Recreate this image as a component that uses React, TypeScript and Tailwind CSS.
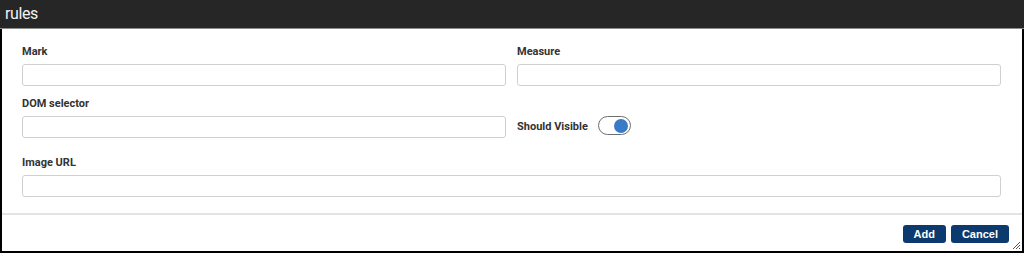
import { useState } from 'react';

// Labelled text input used across the form
function Field({ label, className = '' }: { label: string; className?: string }) {
  return (
    <div className={`flex flex-col ${className}`}>
      <label className="text-[11px] leading-[13px] font-bold text-[#333] mb-[6px]">{label}</label>
      <input
        type="text"
        className="h-[22px] w-full rounded-[3px] border border-[#d0d0d0] bg-white px-2 text-[12px] outline-none"
      />
    </div>
  );
}

export default function App() {
  const [visible, setVisible] = useState(true);

  return (
    <div className="w-[1024px] h-[253px] flex flex-col bg-white font-['Roboto',sans-serif]">
      {/* Title bar */}
      <div className="h-[29px] shrink-0 bg-[#262626] border-b border-[#8c8c8c] flex items-center px-[5px]">
        <span className="text-[16px] leading-none text-[#f2f2f2] tracking-[-0.4px]">rules</span>
      </div>

      <div className="relative flex-1 flex flex-col border-x-2 border-b-2 border-black">
        {/* Form */}
        <div className="pt-[16px] pb-[16px] pl-[20px] pr-[21px] border-b-2 border-[#e3e3e3]">
          <div className="grid grid-cols-2 gap-x-[11px]">
            <Field label="Mark" />
            <Field label="Measure" />
            <Field label="DOM selector" className="mt-[11px]" />
            <div className="mt-[11px] flex items-end">
              <div className="flex items-center h-[22px]">
                <span className="text-[11px] font-bold text-[#333] mr-[10px]">Should Visible</span>
                <button
                  type="button"
                  onClick={() => setVisible(!visible)}
                  className={`w-[33px] h-[19px] rounded-full border-[1.5px] border-[#6e6e6e] bg-white flex items-center px-[2px] -mt-[3px] ${visible ? 'justify-end' : 'justify-start'}`}
                >
                  <span className={`block w-[14px] h-[14px] rounded-full ${visible ? 'bg-[#3a7bc8]' : 'bg-[#bbb]'}`} />
                </button>
              </div>
            </div>
            <Field label="Image URL" className="col-span-2 mt-[18px]" />
          </div>
        </div>

        {/* Footer */}
        <div className="flex-1 flex justify-end items-start pt-[10px] pr-[13px] gap-[5px] font-['Liberation_Sans',sans-serif]">
          <button className="h-[18px] px-[11px] rounded-[3px] bg-[#0d3a6e] text-white text-[11px] font-bold leading-none">Add</button>
          <button className="h-[18px] px-[11px] rounded-[3px] bg-[#0d3a6e] text-white text-[11px] font-bold leading-none">Cancel</button>
        </div>

        {/* Resize grip */}
        <svg className="absolute right-[1px] bottom-[1px]" width="9" height="9" viewBox="0 0 9 9">
          <path d="M8 1L1 8M8 4L4 8M8 7L7 8" stroke="#555" strokeWidth="1" />
        </svg>
      </div>
    </div>
  );
}
